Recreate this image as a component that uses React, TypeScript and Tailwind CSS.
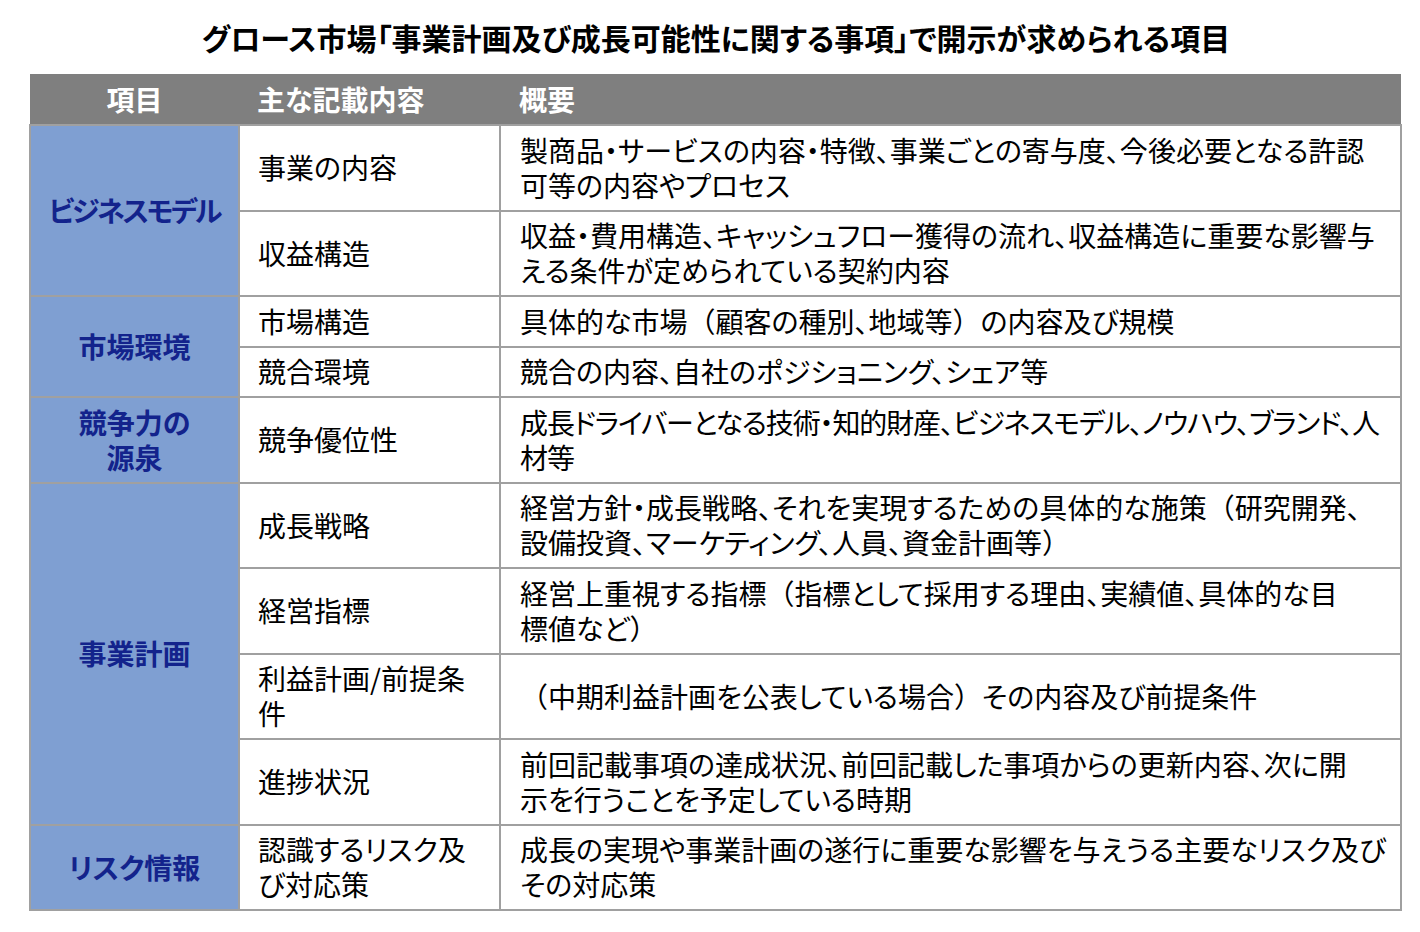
import React from 'react';

type Row = {
  item: string[];
  desc: string[];
  tall: boolean;
  tight?: boolean;
};

type Group = {
  label: string[];
  tightLabel?: boolean;
  rows: Row[];
};

const groups: Group[] = [
  {
    label: ['ビジネスモデル'],
    tightLabel: true,
    rows: [
      { item: ['事業の内容'], desc: ['製商品・サービスの内容・特徴、事業ごとの寄与度、今後必要となる許認', '可等の内容やプロセス'], tall: true },
      { item: ['収益構造'], desc: ['収益・費用構造、キャッシュフロー獲得の流れ、収益構造に重要な影響与', 'える条件が定められている契約内容'], tall: true },
    ],
  },
  {
    label: ['市場環境'],
    rows: [
      { item: ['市場構造'], desc: ['具体的な市場（顧客の種別、地域等）の内容及び規模'], tall: false },
      { item: ['競合環境'], desc: ['競合の内容、自社のポジショニング、シェア等'], tall: false },
    ],
  },
  {
    label: ['競争力の', '源泉'],
    rows: [
      { item: ['競争優位性'], desc: ['成長ドライバーとなる技術・知的財産、ビジネスモデル、ノウハウ、ブランド、人', '材等'], tall: true, tight: true },
    ],
  },
  {
    label: ['事業計画'],
    rows: [
      { item: ['成長戦略'], desc: ['経営方針・成長戦略、それを実現するための具体的な施策（研究開発、', '設備投資、マーケティング、人員、資金計画等）'], tall: true },
      { item: ['経営指標'], desc: ['経営上重視する指標（指標として採用する理由、実績値、具体的な目', '標値など）'], tall: true },
      { item: ['利益計画/前提条', '件'], desc: ['（中期利益計画を公表している場合）その内容及び前提条件'], tall: true },
      { item: ['進捗状況'], desc: ['前回記載事項の達成状況、前回記載した事項からの更新内容、次に開', '示を行うことを予定している時期'], tall: true },
    ],
  },
  {
    label: ['リスク情報'],
    rows: [
      { item: ['認識するリスク及', 'び対応策'], desc: ['成長の実現や事業計画の遂行に重要な影響を与えうる主要なリスク及び', 'その対応策'], tall: true },
    ],
  },
];

// full-width brackets keep their spacing, the rest is set proportionally
function Text({ text }: { text: string }) {
  const parts = text.split(/([（）])/);
  return (
    <>
      {parts.map((p, i) =>
        p === '（' || p === '）' ? (
          <span key={i} className="[font-feature-settings:normal]">
            {p}
          </span>
        ) : (
          <React.Fragment key={i}>{p}</React.Fragment>
        )
      )}
    </>
  );
}

function Lines({ lines }: { lines: string[] }) {
  return (
    <>
      {lines.map((l, i) => (
        <React.Fragment key={i}>
          {i > 0 && <br />}
          <Text text={l} />
        </React.Fragment>
      ))}
    </>
  );
}

export default function App() {
  return (
    <div className="w-[1420px] h-[932px] bg-white font-['Noto_Sans_CJK_JP','Noto_Sans',sans-serif] [font-feature-settings:'palt'] text-black">
      {/* Title */}
      <h1 className="pt-[17px] pl-[12px] h-[74px] text-center text-[30px] leading-[40px] font-bold">
        グロース市場「事業計画及び成長可能性に関する事項」で開示が求められる項目
      </h1>

      {/* Table */}
      <div className="pl-[29px]">
        <table className="w-[1373px] border-collapse table-fixed">
          <colgroup>
            <col className="w-[209px]" />
            <col className="w-[261px]" />
            <col />
          </colgroup>
          <thead>
            <tr className="h-[51px] bg-[#7f7f7f] text-white text-[28px]">
              <th className="text-center font-bold leading-[35px]">項目</th>
              <th className="text-left pl-[18px] font-bold leading-[35px]">主な記載内容</th>
              <th className="text-left pl-[19px] font-bold leading-[35px]">概要</th>
            </tr>
          </thead>
          <tbody>
            {groups.map((g) =>
              g.rows.map((r, i) => (
                <tr key={g.label.join('') + i} className={r.tall ? 'h-[85.5px]' : 'h-[50.5px]'}>
                  {i === 0 && (
                    <td
                      rowSpan={g.rows.length}
                      className={`border-2 border-[#a0a0a0] bg-[#7f9fd2] text-center align-middle text-[28px] leading-[35px] font-bold text-[#13238c] ${
                        g.tightLabel ? 'tracking-[-0.08em]' : ''
                      }`}
                    >
                      <Lines lines={g.label} />
                    </td>
                  )}
                  <td className="border-2 border-[#a0a0a0] pl-[18px] pr-2 align-middle text-[28px] leading-[35px] whitespace-nowrap">
                    <Lines lines={r.item} />
                  </td>
                  <td
                    className={`border-2 border-[#a0a0a0] pl-[19px] pr-2 align-middle text-[28px] leading-[35px] whitespace-nowrap ${
                      r.tight ? 'tracking-[-0.04em]' : ''
                    }`}
                  >
                    <Lines lines={r.desc} />
                  </td>
                </tr>
              ))
            )}
          </tbody>
        </table>
      </div>
    </div>
  );
}
